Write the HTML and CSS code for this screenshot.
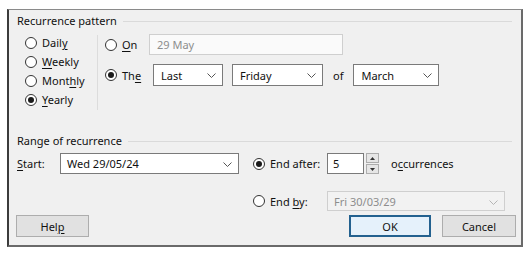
FILE: index.html
```html
<!DOCTYPE html>
<html>

<head>
  <link rel="stylesheet" href="styles.css">
</head>

<body>
  <div class="dialog">
    <section class="group">
      <div class="group-title">Recurrence pattern</div>
      <div class="pattern">
        <div class="freq">
          <label class="radio"><span class="dot"></span><span>Dail<u>y</u></span></label>
          <label class="radio"><span class="dot"></span><span><u>W</u>eekly</span></label>
          <label class="radio"><span class="dot"></span><span>Mont<u>h</u>ly</span></label>
          <label class="radio"><span class="dot on"></span><span><u>Y</u>early</span></label>
        </div>
        <div class="vsep"></div>
        <div class="detail">
          <div class="row">
            <label class="radio radio-on"><span class="dot"></span><span><u>O</u>n</span></label>
            <div class="field field-date off">29 May</div>
          </div>
          <div class="row">
            <label class="radio radio-the"><span class="dot on"></span><span>Th<u>e</u></span></label>
            <div class="field combo combo-last">Last<svg class="chev" width="9" height="5" viewBox="0 0 9 5"><polyline points="0.5,0.5 4.5,4.5 8.5,0.5" /></svg></div>
            <div class="field combo combo-day">Friday<svg class="chev" width="9" height="5" viewBox="0 0 9 5"><polyline points="0.5,0.5 4.5,4.5 8.5,0.5" /></svg></div>
            <span class="of">of</span>
            <div class="field combo combo-month">March<svg class="chev" width="9" height="5" viewBox="0 0 9 5"><polyline points="0.5,0.5 4.5,4.5 8.5,0.5" /></svg></div>
          </div>
        </div>
      </div>
    </section>

    <section class="group group-range">
      <div class="group-title">Range of recurrence</div>
      <div class="range">
        <span class="start-label"><u>S</u>tart:</span>
        <div class="field combo combo-start">Wed 29/05/24<svg class="chev" width="9" height="5" viewBox="0 0 9 5"><polyline points="0.5,0.5 4.5,4.5 8.5,0.5" /></svg></div>
        <label class="radio end-radio"><span class="dot on"></span><span>End after:</span></label>
        <div class="count">
          <div class="field spin-input">5</div>
          <div class="spin">
            <span class="spin-btn"><svg width="5" height="3" viewBox="0 0 5 3"><polygon points="0,3 2.5,0 5,3" /></svg></span>
            <span class="spin-btn"><svg width="5" height="3" viewBox="0 0 5 3"><polygon points="0,0 2.5,3 5,0" /></svg></span>
          </div>
          <span class="occ">o<u>c</u>currences</span>
        </div>
        <span></span>
        <span></span>
        <label class="radio end-radio"><span class="dot"></span><span>End <u>b</u>y:</span></label>
        <div class="field combo combo-end off">Fri 30/03/29<svg class="chev" width="9" height="5" viewBox="0 0 9 5"><polyline points="0.5,0.5 4.5,4.5 8.5,0.5" /></svg></div>
      </div>
    </section>

    <div class="buttons">
      <button class="btn btn-help">Hel<u>p</u></button>
      <span class="spacer"></span>
      <button class="btn btn-ok">OK</button>
      <button class="btn btn-cancel">Cancel</button>
    </div>
  </div>
</body>

</html>
```

FILE: styles.css
```css
body {
  margin: 0;
  background: #fff;
  font-family: 'Noto Sans', 'Open Sans', sans-serif;
  font-size: 11px;
  color: #111;
}

u {
  text-decoration-thickness: 1px;
  text-underline-offset: 2px;
}

.dialog {
  box-sizing: border-box;
  width: 516px;
  height: 238px;
  margin: 9px 0 0 7px;
  background: #f0f0f0;
  border-top: 1px solid #8a8a8a;
  border-left: 2px solid #3c3c3c;
  border-right: 2px solid #6a6a6a;
  border-bottom: 2px solid #6a6a6a;
  display: flex;
  flex-direction: column;
}

.group-title {
  display: flex;
  align-items: center;
  height: 14px;
  margin: 4px 9px 0 8px;
  line-height: 14px;
}

.group-title::after {
  content: '';
  flex: 1;
  margin-left: 6px;
  border-top: 1px solid #dadada;
}

.pattern {
  display: flex;
  padding-left: 16px;
  height: 94px;
}

.freq {
  width: 72px;
  padding-top: 5px;
}

.radio {
  display: flex;
  align-items: center;
  height: 19px;
  white-space: nowrap;
}

.dot {
  box-sizing: border-box;
  width: 12px;
  height: 12px;
  margin-right: 5px;
  border: 1px solid #333;
  border-radius: 50%;
  background: #fff;
  display: flex;
  align-items: center;
  justify-content: center;
  flex: none;
}

.dot.on::after {
  content: '';
  width: 6px;
  height: 6px;
  border-radius: 50%;
  background: #1a1a1a;
}

.vsep {
  width: 1px;
  height: 75px;
  margin-top: 7px;
  background: #dcdcdc;
}

.detail {
  padding: 6px 0 0 7px;
  display: flex;
  flex-direction: column;
  gap: 9px;
}

.row {
  display: flex;
  align-items: center;
}

.radio-on {
  width: 44px;
}

.radio-the {
  width: 48px;
}

.field {
  box-sizing: border-box;
  display: flex;
  align-items: center;
  height: 21px;
  padding-left: 7px;
  border: 1px solid #7a7a7a;
  background: #fff;
  white-space: nowrap;
}

.field.off {
  border-color: #cfcfcf;
  color: #8d8d8d;
}

.field-date {
  width: 194px;
  background: #fafafa;
}

.combo {
  position: relative;
}

.chev {
  position: absolute;
  right: 6px;
  top: 8px;
  fill: none;
  stroke: #555;
  stroke-width: 1;
}

.combo-last {
  width: 70px;
  height: 22px;
}

.combo-day {
  width: 91px;
  height: 22px;
  margin-left: 9px;
}

.of {
  margin: 0 10px;
}

.combo-month {
  width: 86px;
  height: 22px;
}

.group-range .group-title {
  margin-top: 12px;
}

.range {
  display: grid;
  grid-template-columns: 43px 179px 88px auto;
  grid-template-rows: 21px 20px;
  row-gap: 17px;
  padding: 5px 0 0 8px;
  align-items: center;
}

.combo-start {
  width: 179px;
  padding-left: 6px;
}

.end-radio {
  padding-left: 14px;
}

.count {
  display: flex;
  align-items: center;
}

.spin-input {
  width: 37px;
  height: 21px;
  padding-left: 5px;
}

.spin {
  display: flex;
  flex-direction: column;
  margin-left: 2px;
}

.spin-btn {
  box-sizing: border-box;
  display: flex;
  align-items: center;
  justify-content: center;
  width: 13px;
  height: 10px;
  border: 1px solid #adadad;
  background: #e6e6e6;
  fill: #333;
}

.spin-btn + .spin-btn {
  margin-top: 1px;
}

.occ {
  margin-left: 12px;
}

.combo-end {
  width: 178px;
  height: 20px;
  padding-left: 6px;
  background: #f2f2f2;
  border-color: #d8d8d8;
}

.combo-end .chev {
  stroke: #b5b5b5;
}

.buttons {
  display: flex;
  margin-top: 4px;
  padding: 0 5px 0 7px;
}

.spacer {
  flex: 1;
}

.btn {
  box-sizing: border-box;
  height: 22px;
  font: inherit;
  color: #111;
  background: #e1e1e1;
  border: 1px solid #adadad;
  padding: 0;
}

.btn-help {
  width: 73px;
}

.btn-ok {
  width: 82px;
  background: #e5f1fb;
  border: 2px solid #23618f;
}

.btn-cancel {
  width: 74px;
  margin-left: 11px;
}
```
